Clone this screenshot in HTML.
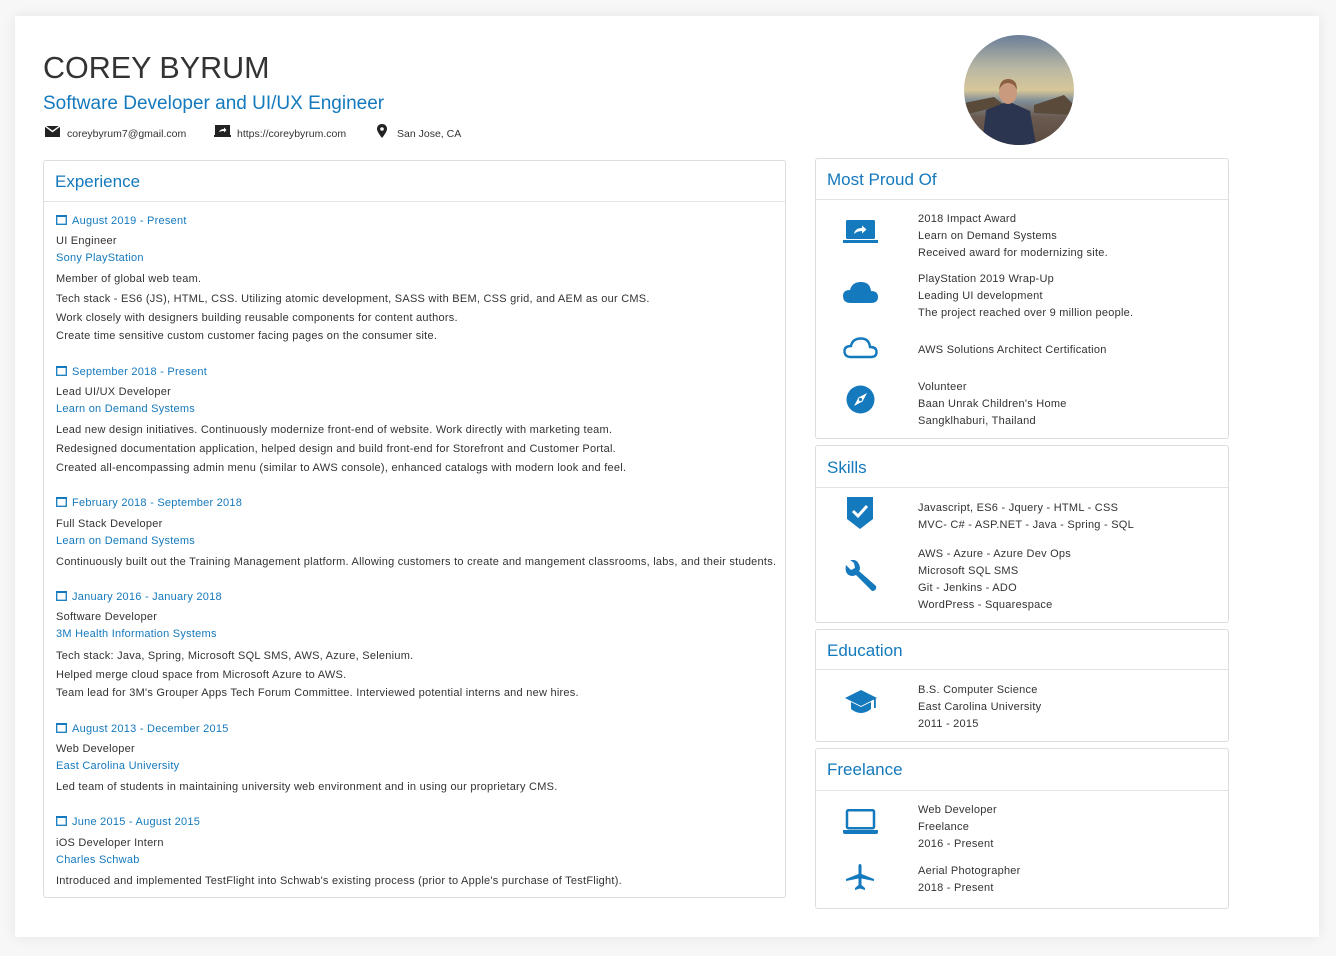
<!DOCTYPE html>
<html><head><meta charset="utf-8"><style>
*{margin:0;padding:0;box-sizing:border-box}
body{width:1336px;height:956px;background:#f7f7f7;font-family:"Liberation Sans",Arial,sans-serif;color:#333;position:relative;overflow:hidden}
.sheet{position:absolute;left:15px;top:16px;width:1304px;height:921px;background:#fff;box-shadow:0 0 12px rgba(0,0,0,.08)}
.a{position:absolute;white-space:nowrap}
.l{position:absolute;font-size:11px;line-height:14px;white-space:nowrap;letter-spacing:.25px;margin-top:1px}
.b{color:#1479bd}
.card{position:absolute;border:1px solid #ddd;border-radius:3px;background:#fff}
.hd{position:absolute;left:0;right:0;border-bottom:1px solid #e3e3e3}
.ttl{position:absolute;font-size:17px;color:#1479bd;line-height:20px}
svg.i{position:absolute}
</style></head><body>
<div class="sheet"></div>
<div class="a" style="left:43px;top:50px;font-size:30.5px;color:#333;line-height:36px">COREY BYRUM</div>
<div class="a b" style="left:43px;top:93px;font-size:19px;line-height:22px">Software Developer and UI/UX Engineer</div>
<svg class="i" style="left:45px;top:126px" width="15" height="11" viewBox="0 0 15 11"><rect width="15" height="11" fill="#222"/><path d="M0 0 L7.5 5.5 L15 0" stroke="#fff" stroke-width="1.4" fill="none"/></svg>
<div class="l" style="left:67px;top:126px;font-size:10.5px;letter-spacing:0">coreybyrum7@gmail.com</div>
<svg class="i" style="left:214px;top:125px" width="17" height="12" viewBox="0 0 17 12"><rect x="1" y="0" width="15" height="10" fill="#222"/><rect x="0" y="10" width="17" height="2" fill="#222"/><path d="M5 7 Q6 4 10 4 L10 2.5 L12.5 5 L10 7.5 L10 6 Q7 6 5 7Z" fill="#fff"/></svg>
<div class="l" style="left:237px;top:126px;font-size:10.5px;letter-spacing:0">https://coreybyrum.com</div>
<svg class="i" style="left:377px;top:124px" width="10" height="14" viewBox="0 0 10 14"><path d="M5 0 C2 0 0 2 0 5 C0 8 5 14 5 14 C5 14 10 8 10 5 C10 2 8 0 5 0Z" fill="#222"/><circle cx="5" cy="5" r="1.8" fill="#fff"/></svg>
<div class="l" style="left:397px;top:126px;font-size:10.5px;letter-spacing:0">San Jose, CA</div>

<svg class="i" style="left:964px;top:35px" width="110" height="110" viewBox="0 0 110 110"><defs><clipPath id="c"><circle cx="55" cy="55" r="55"/></clipPath><linearGradient id="g" x1="0" y1="0" x2="0" y2="1"><stop offset="0" stop-color="#6b7f99"/><stop offset=".3" stop-color="#b9b7a3"/><stop offset=".5" stop-color="#d7c79a"/><stop offset=".6" stop-color="#7f8d96"/><stop offset=".75" stop-color="#6b5a50"/><stop offset="1" stop-color="#5a4a40"/></linearGradient></defs><g clip-path="url(#c)"><rect width="110" height="110" fill="url(#g)"/><path d="M0 68 L30 62 L40 70 L0 80Z" fill="#5a4a3a"/><path d="M70 70 L100 60 L110 70 L110 80 L70 78Z" fill="#5a4a3a"/><path d="M18 110 L22 75 L40 68 L48 68 L66 76 L72 110Z" fill="#2b3550"/><ellipse cx="44" cy="58" rx="9" ry="11" fill="#c99a7d"/><path d="M35 55 Q36 44 44 44 Q53 44 53 55 Q50 48 44 48 Q38 48 35 55Z" fill="#8a6040"/></g></svg>

<div class="card" style="left:43px;top:160px;width:743px;height:738px">
<div class="hd" style="top:0;height:41px"></div>
<div class="ttl" style="left:11px;top:11px">Experience</div>
</div>

<div class="card" style="left:815px;top:158px;width:414px;height:281px"><div class="hd" style="height:41px"></div><div class="ttl" style="left:11px;top:11px">Most Proud Of</div></div>
<div class="card" style="left:815px;top:445px;width:414px;height:178px"><div class="hd" style="height:42px"></div><div class="ttl" style="left:11px;top:12px">Skills</div></div>
<div class="card" style="left:815px;top:629px;width:414px;height:113px"><div class="hd" style="height:40px"></div><div class="ttl" style="left:11px;top:11px">Education</div></div>
<div class="card" style="left:815px;top:748px;width:414px;height:161px"><div class="hd" style="height:42px"></div><div class="ttl" style="left:11px;top:11px">Freelance</div></div>

<svg width="0" height="0" style="position:absolute"><defs><g id="cal"><rect x="0.7" y="1.7" width="9.6" height="8.6" fill="none" stroke="#1479bd" stroke-width="1.3"/><rect x="0" y="1" width="11" height="2" fill="#1479bd"/></g></defs></svg>
<svg class="i" style="left:56px;top:214px" width="11" height="11"><use href="#cal"/></svg>
<svg class="i" style="left:56px;top:365px" width="11" height="11"><use href="#cal"/></svg>
<svg class="i" style="left:56px;top:496px" width="11" height="11"><use href="#cal"/></svg>
<svg class="i" style="left:56px;top:590px" width="11" height="11"><use href="#cal"/></svg>
<svg class="i" style="left:56px;top:722px" width="11" height="11"><use href="#cal"/></svg>
<svg class="i" style="left:56px;top:815px" width="11" height="11"><use href="#cal"/></svg>

<div class="l b" style="left:72px;top:213px">August 2019 - Present</div>
<div class="l" style="left:56px;top:233px">UI Engineer</div>
<div class="l b" style="left:56px;top:250px">Sony PlayStation</div>
<div class="l" style="left:56px;top:271px">Member of global web team.</div>
<div class="l" style="left:56px;top:291px">Tech stack - ES6 (JS), HTML, CSS. Utilizing atomic development, SASS with BEM, CSS grid, and AEM as our CMS.</div>
<div class="l" style="left:56px;top:310px">Work closely with designers building reusable components for content authors.</div>
<div class="l" style="left:56px;top:328px">Create time sensitive custom customer facing pages on the consumer site.</div>

<div class="l b" style="left:72px;top:364px">September 2018 - Present</div>
<div class="l" style="left:56px;top:384px">Lead UI/UX Developer</div>
<div class="l b" style="left:56px;top:401px">Learn on Demand Systems</div>
<div class="l" style="left:56px;top:422px">Lead new design initiatives. Continuously modernize front-end of website. Work directly with marketing team.</div>
<div class="l" style="left:56px;top:441px">Redesigned documentation application, helped design and build front-end for Storefront and Customer Portal.</div>
<div class="l" style="left:56px;top:460px">Created all-encompassing admin menu (similar to AWS console), enhanced catalogs with modern look and feel.</div>

<div class="l b" style="left:72px;top:495px">February 2018 - September 2018</div>
<div class="l" style="left:56px;top:516px">Full Stack Developer</div>
<div class="l b" style="left:56px;top:533px">Learn on Demand Systems</div>
<div class="l" style="left:56px;top:554px">Continuously built out the Training Management platform. Allowing customers to create and mangement classrooms, labs, and their students.</div>

<div class="l b" style="left:72px;top:589px">January 2016 - January 2018</div>
<div class="l" style="left:56px;top:609px">Software Developer</div>
<div class="l b" style="left:56px;top:626px">3M Health Information Systems</div>
<div class="l" style="left:56px;top:648px">Tech stack: Java, Spring, Microsoft SQL SMS, AWS, Azure, Selenium.</div>
<div class="l" style="left:56px;top:667px">Helped merge cloud space from Microsoft Azure to AWS.</div>
<div class="l" style="left:56px;top:685px">Team lead for 3M's Grouper Apps Tech Forum Committee. Interviewed potential interns and new hires.</div>

<div class="l b" style="left:72px;top:721px">August 2013 - December 2015</div>
<div class="l" style="left:56px;top:741px">Web Developer</div>
<div class="l b" style="left:56px;top:758px">East Carolina University</div>
<div class="l" style="left:56px;top:779px">Led team of students in maintaining university web environment and in using our proprietary CMS.</div>

<div class="l b" style="left:72px;top:814px">June 2015 - August 2015</div>
<div class="l" style="left:56px;top:835px">iOS Developer Intern</div>
<div class="l b" style="left:56px;top:852px">Charles Schwab</div>
<div class="l" style="left:56px;top:873px">Introduced and implemented TestFlight into Schwab's existing process (prior to Apple's purchase of TestFlight).</div>

<div class="l" style="left:918px;top:211px">2018 Impact Award</div>
<div class="l" style="left:918px;top:228px">Learn on Demand Systems</div>
<div class="l" style="left:918px;top:245px">Received award for modernizing site.</div>
<div class="l" style="left:918px;top:271px">PlayStation 2019 Wrap-Up</div>
<div class="l" style="left:918px;top:288px">Leading UI development</div>
<div class="l" style="left:918px;top:305px">The project reached over 9 million people.</div>
<div class="l" style="left:918px;top:342px">AWS Solutions Architect Certification</div>
<div class="l" style="left:918px;top:379px">Volunteer</div>
<div class="l" style="left:918px;top:396px">Baan Unrak Children's Home</div>
<div class="l" style="left:918px;top:413px">Sangklhaburi, Thailand</div>

<div class="l" style="left:918px;top:500px">Javascript, ES6 - Jquery - HTML - CSS</div>
<div class="l" style="left:918px;top:517px">MVC- C# - ASP.NET - Java - Spring - SQL</div>
<div class="l" style="left:918px;top:546px">AWS - Azure - Azure Dev Ops</div>
<div class="l" style="left:918px;top:563px">Microsoft SQL SMS</div>
<div class="l" style="left:918px;top:580px">Git - Jenkins - ADO</div>
<div class="l" style="left:918px;top:597px">WordPress - Squarespace</div>

<div class="l" style="left:918px;top:682px">B.S. Computer Science</div>
<div class="l" style="left:918px;top:699px">East Carolina University</div>
<div class="l" style="left:918px;top:716px">2011 - 2015</div>

<div class="l" style="left:918px;top:802px">Web Developer</div>
<div class="l" style="left:918px;top:819px">Freelance</div>
<div class="l" style="left:918px;top:836px">2016 - Present</div>
<div class="l" style="left:918px;top:863px">Aerial Photographer</div>
<div class="l" style="left:918px;top:880px">2018 - Present</div>

<svg class="i" style="left:843px;top:219px" width="35" height="25" viewBox="0 0 35 25"><rect x="3" y="1" width="29" height="19" rx="1.5" fill="#1479bd"/><rect x="0" y="21" width="35" height="3" fill="#1479bd"/><path d="M11 15 Q12 9 19 9 L19 6.5 L23.5 10.5 L19 14.5 L19 12 Q14 12 11 15Z" fill="#fff"/></svg>
<svg class="i" style="left:843px;top:280px" width="35" height="25" viewBox="0 0 35 25"><path d="M8 23 Q0 23 0 16 Q0 10 7 10 Q9 2 18 2 Q27 2 28 11 Q35 11 35 17 Q35 23 28 23Z" fill="#1479bd"/></svg>
<svg class="i" style="left:843px;top:335px" width="35" height="25" viewBox="0 0 35 25"><path d="M8 22 Q1.5 22 1.5 16 Q1.5 11 8 11 Q9.5 3.5 18 3.5 Q26 3.5 27 12 Q33.5 12 33.5 17 Q33.5 22 28 22Z" fill="none" stroke="#1479bd" stroke-width="2.4"/></svg>
<svg class="i" style="left:846px;top:385px" width="29" height="29" viewBox="0 0 29 29"><circle cx="14.5" cy="14.5" r="14" fill="#1479bd"/><path d="M21 8 L16.5 16.5 L8 21 L12.5 12.5Z" fill="#fff"/><circle cx="14.5" cy="14.5" r="1.6" fill="#1479bd"/></svg>
<svg class="i" style="left:847px;top:497px" width="26" height="32" viewBox="0 0 26 32"><path d="M0 0 H26 V22 L13 32 L0 22Z" fill="#1479bd"/><path d="M6 14 L11 19 L20 9" stroke="#fff" stroke-width="3" fill="none"/></svg>
<svg class="i" style="left:845px;top:560px" width="32" height="32" viewBox="0 0 32 32"><path d="M1 5 L6 10 L10 8 L9 3 L4 -1 Q14 -1 15 8 Q15 10 14 11 L31 26 Q32 31 27 31 L11 15 Q9 16 7 16 Q-1 15 1 5Z" fill="#1479bd"/></svg>
<svg class="i" style="left:845px;top:689px" width="32" height="26" viewBox="0 0 32 26"><path d="M16 1 L32 9 L16 17 L0 9Z" fill="#1479bd"/><path d="M6 13 V20 Q16 28 26 20 V13 L16 18Z" fill="#1479bd"/><rect x="29" y="9" width="1.8" height="10" fill="#1479bd"/></svg>
<svg class="i" style="left:843px;top:809px" width="35" height="26" viewBox="0 0 35 26"><rect x="4" y="1.2" width="27" height="18" rx="1.5" fill="none" stroke="#1479bd" stroke-width="2.5"/><path d="M0 21 H35 V23 Q35 25 33 25 H2 Q0 25 0 23Z" fill="#1479bd"/></svg>
<svg class="i" style="left:846px;top:863px" width="28" height="28" viewBox="0 0 28 28"><path d="M12.5 2 Q14 0 15.5 2 L15.5 11 L28 16 L28 18 L15.5 15.5 L15.5 22 L19 25 L19 27 L14 25.5 L9 27 L9 25 L12.5 22 L12.5 15.5 L0 18 L0 16 L12.5 11Z" fill="#1479bd"/></svg>
</body></html>
